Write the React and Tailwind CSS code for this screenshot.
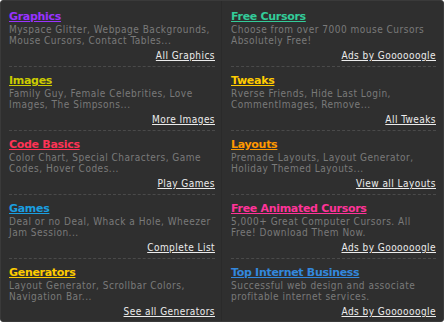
const left = [
  { title: 'Graphics', color: 'text-[#9933ff]', text: 'Myspace Glitter, Webpage Backgrounds, Mouse Cursors, Contact Tables...', link: 'All Graphics' },
  { title: 'Images', color: 'text-[#cccc00]', text: 'Family Guy, Female Celebrities, Love Images, The Simpsons...', link: 'More Images' },
  { title: 'Code Basics', color: 'text-[#ff3355]', text: 'Color Chart, Special Characters, Game Codes, Hover Codes...', link: 'Play Games' },
  { title: 'Games', color: 'text-[#1a9ee0]', text: 'Deal or no Deal, Whack a Hole, Wheezer Jam Session...', link: 'Complete List' },
  { title: 'Generators', color: 'text-[#ffcc00]', text: 'Layout Generator, Scrollbar Colors, Navigation Bar...', link: 'See all Generators' },
];

const right = [
  { title: 'Free Cursors', color: 'text-[#33cc99]', text: 'Choose from over 7000 mouse Cursors Absolutely Free!', link: 'Ads by Goooooogle' },
  { title: 'Tweaks', color: 'text-[#ffcc00]', text: 'Rverse Friends, Hide Last Login, CommentImages, Remove...', link: 'All Tweaks' },
  { title: 'Layouts', color: 'text-[#ff9900]', text: 'Premade Layouts, Layout Generator, Holiday Themed Layouts...', link: 'View all Layouts' },
  { title: 'Free Animated Cursors', color: 'text-[#ff3399]', text: '5,000+ Great Computer Cursors. All Free! Download Them Now.', link: 'Ads by Goooooogle' },
  { title: 'Top Internet Business', color: 'text-[#3388dd]', text: 'Successful web design and associate profitable internet services.', link: 'Ads by Goooooogle' },
];

function Section({ title, color, text, link, last }) {
  return (
    <div className={`pt-[7px] h-[64px] ${last ? '' : 'border-b border-dashed border-[#4a4a4a]'}`}>
      <a href="#" className={`block font-bold text-[11px] leading-[14px] tracking-[-0.3px] underline ${color}`}>{title}</a>
      <p className="font-['DejaVu_Sans_Condensed','DejaVu_Sans',sans-serif] text-[10px] leading-[11px] tracking-[0.5px] text-[#7a7a7a]">{text}</p>
      <div className="text-right mt-[4px] text-[10px] leading-[12px]">
        <a href="#" className="font-['DejaVu_Sans_Condensed','DejaVu_Sans',sans-serif] tracking-[0.45px] text-[#ececec] underline">{link}</a>
      </div>
    </div>
  );
}

export default function App() {
  return (
    <div className="w-[444px] h-[322px] bg-[#2f2f2f] border border-[#3a3a3a] rounded-[3px] overflow-hidden font-['DejaVu_Sans',Verdana,sans-serif] grid grid-cols-2">
      <div className="pl-[8px] pr-[6px] pt-[2px] border-r border-[#2a2a2a]">
        {left.map((s, i) => <Section key={i} {...s} last={i === left.length - 1} />)}
      </div>
      <div className="pl-[9px] pr-[7px] pt-[2px]">
        {right.map((s, i) => <Section key={i} {...s} last={i === right.length - 1} />)}
      </div>
    </div>
  );
}
